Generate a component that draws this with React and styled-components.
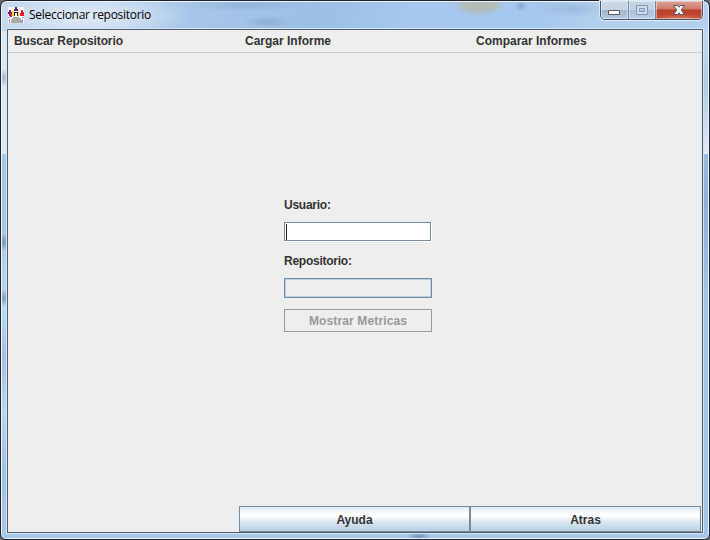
import React from "react";
import styled, { createGlobalStyle } from "styled-components";

const GlobalStyle = createGlobalStyle`
  * { box-sizing: border-box; }
  body { margin: 0; background: #62666b; overflow: hidden; }
`;

const Window = styled.div`
  width: 710px;
  height: 540px;
  display: flex;
  flex-direction: column;
  padding: 0 5px 5px;
  border: 1px solid #1d222c;
  border-radius: 7px 7px 6px 6px;
  box-shadow: inset 0 0 0 1px #eef6fd;
  background:
    radial-gradient(ellipse 5px 9px at 3px 77px, #a5b1c8 0%, transparent 100%),
    radial-gradient(ellipse 6px 9px at 3px 241px, #7d94b1 0%, transparent 100%),
    radial-gradient(ellipse 6px 9px at 3px 297px, #8299b5 0%, transparent 100%),
    radial-gradient(ellipse 12px 6px at 418px 536px, #7391b8 0%, transparent 100%),
    radial-gradient(ellipse 26px 12px at 478px 3px, #b4bcb4 0%, #b2bdbb 60%, transparent 100%),
    radial-gradient(ellipse 6px 6px at 520px 5px, #8ba7ca 0%, transparent 100%),
    radial-gradient(ellipse 24px 6px at 266px 21px, #8fadd2 0%, transparent 100%),
    radial-gradient(ellipse 60px 7px at 245px 4px, #94b3d9 0%, transparent 100%),
    radial-gradient(ellipse 35px 8px at 570px 8px, #9cbadc 0%, transparent 100%),
    radial-gradient(ellipse 110px 26px at 80px 15px, #e0ebf7 0%, #d0e0f3 45%, transparent 100%),
    linear-gradient(to right, #dce8f6 0 7px, transparent 7px) 0 30px / 7px 123px no-repeat,
    linear-gradient(to bottom, #c4d8ef 0, #b3cbe3 45%, #e0eaf5 100%) right 30px / 7px 123px no-repeat,
    linear-gradient(to bottom, #9abde4 0, #8dafd8 12%, #a4c5e9 38%, #a4c5e9 100%) right 153px / 7px 390px no-repeat,
    linear-gradient(100deg, #bed5ee 0, #a9c8ea 24%, #9bbfe5 45%, #a6c8ee 58%, #a5c8ef 76%, #b3d0ed 84%, #b5d0ee 100%) 0 0 / 100% 30px no-repeat,
    linear-gradient(to bottom, #aac7e8 0, #aac7e8 42%, #badaf8 57%, #a2c0e4 66%, #bad6f3 76%, #a1c1e6 87%, #aac8e9 100%);
`;

const TitleBar = styled.header`
  height: 28px;
  flex: none;
  display: flex;
  align-items: flex-start;
  padding-left: 2px;
`;

const AppIcon = styled.svg`
  width: 16px;
  height: 16px;
  margin-top: 6px;
  flex: none;
`;

const Title = styled.h1`
  margin: 5px 0 0 5px;
  font: 400 12px/18px "Open Sans", "Noto Sans", sans-serif;
  letter-spacing: -0.28px;
  color: #000;
  white-space: nowrap;
`;

const WindowControls = styled.div`
  display: flex;
  height: 19px;
  margin: 0 1px 0 auto;
  border: 1px solid #435672;
  border-top: 0;
  border-radius: 0 0 5px 5px;
  box-shadow: 0 0 0 1px #dce9f7;
  overflow: hidden;
`;

const controlFill = {
  normal: "linear-gradient(#c8d5e3 0 48%, #9eb2c9 49%, #b7cadf 100%)",
  muted: "linear-gradient(#c2d3e6 0 48%, #a8bfd9 49%, #b9d0e9 100%)",
  close: "radial-gradient(ellipse 25px 7px at 50% 110%, #e58a68, transparent), linear-gradient(#dda093 0, #d07c6d 45%, #b63e2b 49%, #c5503b 100%)",
};

const ControlButton = styled.button`
  width: ${({ $width }) => $width}px;
  height: 18px;
  padding: 0;
  display: grid;
  place-items: center;
  border: 0;
  border-right: ${({ $kind }) => ($kind === "close" ? "0" : "1px solid #71849d")};
  background: ${({ $kind }) => controlFill[$kind]};
  box-shadow: inset 0 0 0 1px rgba(255, 255, 255, 0.45);
`;

const Client = styled.main`
  flex: 1;
  min-height: 0;
  display: flex;
  flex-direction: column;
  border: 1px solid #4f5d6b;
  outline: 1px solid #d5e7f7;
  margin: 0 1px 1px;
  background: #eee;
  color: #333;
  font: 700 12px/15px "Liberation Sans", Arial, sans-serif;
`;

const MenuBar = styled.nav`
  flex: none;
  height: 23px;
  display: grid;
  grid-template-columns: repeat(3, 231px);
  border-bottom: 1px solid #ccc;
`;

const MenuItem = styled.span`
  padding: 4px 6px 0;
  letter-spacing: ${({ $tracking = 0 }) => $tracking}px;
`;

const Form = styled.form`
  flex: 1;
  display: flex;
  flex-direction: column;
  width: 148px;
  margin: 145px 0 0 276px;
`;

const Label = styled.label`
  height: 15px;
  margin-bottom: 9px;
  letter-spacing: -0.25px;
`;

const TextField = styled.div`
  flex: none;
  display: flex;
  width: ${({ $disabled }) => ($disabled ? 148 : 147)}px;
  height: ${({ $disabled }) => ($disabled ? 20 : 19)}px;
  margin-bottom: ${({ $disabled }) => ($disabled ? 11 : 13)}px;
  padding: 1px;
  border: 1px solid #7a8a99;
  background: ${({ $disabled }) => ($disabled ? "#eee" : "#fff")};
  box-shadow: ${({ $disabled }) => ($disabled ? "inset 0 0 0 1px #b8cfe5" : "1px 1px 0 #fff")};
`;

const Caret = styled.span`
  width: 1px;
  height: 16px;
  background: #222;
`;

const SubmitButton = styled.button`
  height: 23px;
  padding: 2px 0 0;
  border: 1px solid #999;
  background: #eee;
  color: #999;
  font: inherit;
  letter-spacing: 0.13px;
`;

const Footer = styled.footer`
  height: 26px;
  display: grid;
  grid-template-columns: repeat(2, 231px);
  margin-left: 231px;
`;

const FooterButton = styled.button`
  padding: 3px 0 0;
  border: 1px solid #7a8a99;
  background: linear-gradient(#dfeaf3 0, #fff 30%, #fff 38%, #dbe7f1 62%, #b8cfe5 100%);
  color: #333;
  font: inherit;
`;

function PeopleIcon() {
  return (
    <AppIcon viewBox="0 0 16 16" shapeRendering="crispEdges">
      <path fill="#fff" d="M0 0h16v16H0z" />
      <path fill="#602080" d="M7 0h2v2h1v2H6V2h1z" />
      <path fill="#7d168d" d="M1 3h2v2h1v4H1V7H0V5h1z" />
      <path fill="#c51d52" d="M2 6h2v4H2z" />
      <path fill="#ef1835" d="M13 3h2v2h1v4h-4V6h1z" />
      <path fill="#eedc29" d="M4 4h2v5H4zM10 4h1v5h-1z" />
      <path fill="#35152c" d="M6 5h4v1H7v3H6zM9 6h1v3H9z" />
      <path fill="#b68ab8" d="M0 10h2v1H0zM1 12h1v4H1zM14 10h2v1h-2zM14 12h1v4h-1z" />
      <path fill="#aaa" d="M5 10h6v1h2v2h1v3H3v-4h1v-1h1z" />
    </AppIcon>
  );
}

function ControlGlyph({ kind }) {
  if (kind === "close") {
    return (
      <svg width="14" height="12" viewBox="0 0 14 12">
        <path d="M1.5 1.5h4L7 3.2l1.5-1.7h4L9.2 6l3.3 4.5h-4L7 8.8l-1.5 1.7h-4L4.8 6z" fill="#f5f5f5" stroke="#535666" />
      </svg>
    );
  }
  if (kind === "muted") {
    return (
      <svg width="12" height="10" viewBox="0 0 12 10">
        <path d="M.5.5h11v9H.5zM3.5 3.5v3h5v-3z" fill="#d0ddec" fillRule="evenodd" stroke="#8396ae" />
      </svg>
    );
  }
  return (
    <svg width="13" height="10" viewBox="0 0 13 10">
      <path d="M.5 5.5h11v4H.5z" fill="#fff" stroke="#535666" />
    </svg>
  );
}

const controls = [
  { kind: "normal", width: 28, label: "Minimizar" },
  { kind: "muted", width: 27, label: "Maximizar" },
  { kind: "close", width: 46, label: "Cerrar" },
];

export default function App() {
  return (
    <>
      <GlobalStyle />
      <Window>
        <TitleBar>
          <PeopleIcon />
          <Title>Seleccionar repositorio</Title>
          <WindowControls>
            {controls.map(({ kind, width, label }) => (
              <ControlButton key={kind} $kind={kind} $width={width} aria-label={label}>
                <ControlGlyph kind={kind} />
              </ControlButton>
            ))}
          </WindowControls>
        </TitleBar>
        <Client>
          <MenuBar>
            <MenuItem $tracking={-0.1}>Buscar Repositorio</MenuItem>
            <MenuItem>Cargar Informe</MenuItem>
            <MenuItem>Comparar Informes</MenuItem>
          </MenuBar>
          <Form>
            <Label>Usuario:</Label>
            <TextField><Caret /></TextField>
            <Label>Repositorio:</Label>
            <TextField $disabled />
            <SubmitButton type="button" disabled>Mostrar Metricas</SubmitButton>
          </Form>
          <Footer>
            <FooterButton>Ayuda</FooterButton>
            <FooterButton>Atras</FooterButton>
          </Footer>
        </Client>
      </Window>
    </>
  );
}
